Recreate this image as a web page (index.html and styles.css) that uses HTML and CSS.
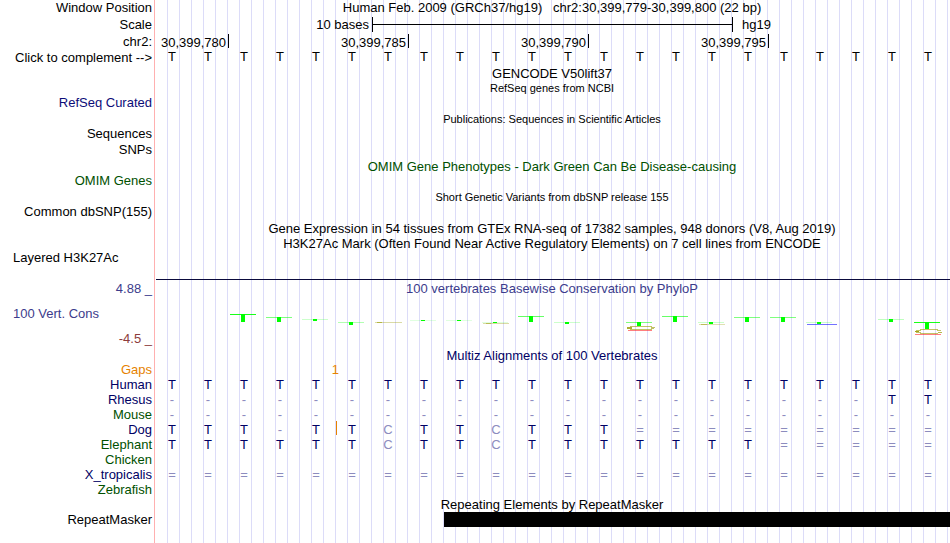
FILE: index.html
```html
<!DOCTYPE html>
<html lang="en">
<head>
  <meta charset="UTF-8">
  <meta name="viewport" content="width=device-width, initial-scale=1.0">
  <title>Human chr2:30,399,779-30,399,800 Genome Browser</title>
  <link rel="stylesheet" href="styles.css">
</head>
<body>
  <main class="browser">
    <!-- Ruler -->
    <div class="row">
      <div class="label">Window Position</div>
      <div class="title position">Human Feb. 2009 (GRCh37/hg19)   chr2:30,399,779-30,399,800 (22 bp)</div>
    </div>
    <div class="row tall">
      <div class="label">Scale</div>
      <div class="plot columns">
        <span class="scale-size">10 bases</span>
        <span class="scale-bar"></span>
        <span class="scale-db">hg19</span>
      </div>
    </div>
    <div class="row tall">
      <div class="label">chr2:</div>
      <div class="plot columns">
        <span class="tick tick-780">30,399,780</span>
        <span class="tick tick-785">30,399,785</span>
        <span class="tick tick-790">30,399,790</span>
        <span class="tick tick-795">30,399,795</span>
      </div>
    </div>
    <div class="row short">
      <div class="label">Click to complement --&gt;</div>
      <div class="plot columns ruler-bases" id="ruler-bases"></div>
    </div>

    <!-- Gene and variant tracks -->
    <div class="row heading"><div class="title">GENCODE V50lift37</div></div>
    <div class="row short"><div class="title small">RefSeq genes from NCBI</div></div>
    <div class="row short data"><div class="label blue">RefSeq Curated</div></div>
    <div class="row"><div class="title small">Publications: Sequences in Scientific Articles</div></div>
    <div class="row short data"><div class="label">Sequences</div></div>
    <div class="row"><div class="label">SNPs</div></div>
    <div class="row heading"><div class="title green">OMIM Gene Phenotypes - Dark Green Can Be Disease-causing</div></div>
    <div class="row short data"><div class="label green">OMIM Genes</div></div>
    <div class="row"><div class="title small">Short Genetic Variants from dbSNP release 155</div></div>
    <div class="row short data"><div class="label">Common dbSNP(155)</div></div>
    <div class="row heading"><div class="title">Gene Expression in 54 tissues from GTEx RNA-seq of 17382 samples, 948 donors (V8, Aug 2019)</div></div>
    <div class="row short"><div class="title">H3K27Ac Mark (Often Found Near Active Regulatory Elements) on 7 cell lines from ENCODE</div></div>
    <div class="row histone">
      <div class="label left">Layered H3K27Ac</div>
      <div class="plot baseline"></div>
    </div>

    <!-- Conservation -->
    <div class="row conservation">
      <div class="label axis">
        <span>4.88 _</span>
        <span class="axis-name">100 Vert. Cons</span>
        <span class="axis-min">-4.5 _</span>
      </div>
      <div class="plot">
        <div class="axis-title">100 vertebrates Basewise Conservation by PhyloP</div>
        <svg class="logo" viewBox="0 0 792 50" preserveAspectRatio="none" aria-hidden="true">
          <g class="arms" fill="#00ff00">
            <rect x="74" y="16" width="26" height="1" opacity="0.9"></rect>
            <rect x="110" y="19" width="26" height="1" opacity="0.5"></rect>
            <rect x="146" y="21" width="26" height="1" opacity="0.2"></rect>
            <rect x="182" y="24" width="26" height="1" opacity="0.3"></rect>
            <rect x="254" y="22" width="26" height="1" opacity="0.12"></rect>
            <rect x="290" y="22" width="26" height="1" opacity="0.12"></rect>
            <rect x="326" y="24" width="26" height="1" opacity="0.12"></rect>
            <rect x="362" y="18" width="26" height="1" opacity="0.6"></rect>
            <rect x="398" y="24" width="26" height="1" opacity="0.2"></rect>
            <rect x="470" y="24" width="26" height="1" opacity="0.5"></rect>
            <rect x="506" y="18" width="26" height="1" opacity="0.6"></rect>
            <rect x="542" y="24" width="26" height="1" opacity="0.2"></rect>
            <rect x="578" y="19" width="26" height="1" opacity="0.5"></rect>
            <rect x="614" y="19" width="26" height="1" opacity="0.5"></rect>
            <rect x="650" y="24" width="26" height="1" opacity="0.2"></rect>
            <rect x="722" y="21" width="26" height="1" opacity="0.25"></rect>
            <rect x="758" y="24" width="26" height="1" opacity="0.9"></rect>
          </g>
          <g class="stems" fill="#00ff00">
            <rect x="85" y="16" width="4" height="8"></rect>
            <rect x="121" y="19" width="4" height="5"></rect>
            <rect x="157" y="21" width="4" height="2"></rect>
            <rect x="193" y="24" width="4" height="3"></rect>
            <rect x="265" y="22" width="4" height="1"></rect>
            <rect x="301" y="22" width="4" height="1"></rect>
            <rect x="337" y="24" width="4" height="1"></rect>
            <rect x="373" y="18" width="4" height="6"></rect>
            <rect x="409" y="24" width="4" height="2"></rect>
            <rect x="481" y="24" width="4" height="4"></rect>
            <rect x="517" y="18" width="4" height="6"></rect>
            <rect x="553" y="24" width="4" height="2"></rect>
            <rect x="589" y="19" width="4" height="5"></rect>
            <rect x="625" y="19" width="4" height="5"></rect>
            <rect x="661" y="24" width="4" height="2"></rect>
            <rect x="733" y="21" width="4" height="3"></rect>
            <rect x="769" y="24" width="4" height="7"></rect>
          </g>
          <!-- flattened bases under the T -->
          <g fill="#999900">
            <rect x="219" y="24" width="27" height="1" opacity="0.35"></rect>
            <rect x="221" y="24" width="5" height="1" opacity="0.6"></rect>
            <rect x="327" y="25" width="26" height="1" opacity="0.35"></rect>
            <rect x="330" y="25" width="5" height="1" opacity="0.5"></rect>
            <rect x="543" y="26" width="26" height="1" opacity="0.3"></rect>
            <rect x="545" y="26" width="6" height="1" opacity="0.5"></rect>
            <rect x="471" y="29" width="5" height="2" opacity="0.8"></rect>
            <rect x="495" y="29" width="4" height="1" opacity="0.6"></rect>
            <rect x="495" y="30" width="3" height="1" opacity="0.6"></rect>
            <rect x="760" y="32" width="5" height="1" opacity="0.6"></rect>
            <rect x="759" y="33" width="4" height="1" opacity="0.9"></rect>
            <rect x="760" y="34" width="5" height="1" opacity="0.6"></rect>
            <rect x="781" y="32" width="4" height="1" opacity="0.6"></rect>
            <rect x="782" y="34" width="4" height="1" opacity="0.7"></rect>
          </g>
          <g fill="none" stroke="#999900" opacity="0.6">
            <path d="M474 28.5H496M474 31.5H496"></path>
            <path d="M764 31.5H782M764 35.5H782"></path>
          </g>
          <g fill="#ff0000">
            <rect x="472" y="32" width="24" height="1" opacity="0.5"></rect>
            <rect x="759" y="36" width="26" height="1" opacity="0.5"></rect>
          </g>
          <rect x="651" y="26" width="30" height="1" fill="#0000ff" opacity="0.55"></rect>
        </svg>
      </div>
    </div>

    <!-- Alignment -->
    <div class="row tight"><div class="title navy">Multiz Alignments of 100 Vertebrates</div></div>
    <table class="alignment">
      <thead>
        <tr class="gaps">
          <th scope="row">Gaps</th>
          <td colspan="5"><span class="gap-count">1</span></td>
          <td colspan="17"></td>
        </tr>
      </thead>
      <tbody id="alignment-body"></tbody>
    </table>

    <!-- Repeats -->
    <div class="row short repeats"><div class="title">Repeating Elements by RepeatMasker</div></div>
    <div class="row short">
      <div class="label">RepeatMasker</div>
      <div class="plot columns"><span class="repeat"></span></div>
    </div>
  </main>

  <script src="tracks.js"></script>
</body>
</html>
```
FILE: styles.css
```css
* {
  margin: 0;
  padding: 0;
  box-sizing: border-box;
}

body {
  background: #ffffff;
  color: #000000;
  font-family: "Liberation Sans", Arial, Helvetica, sans-serif;
  font-size: 13px;
}

/* guide lines: three per base, only behind the plot area */
.browser {
  min-height: 100vh;
  padding: 0 2px 0 156px;
  background-image:
    linear-gradient(#ffb0b0, #ffb0b0),
    linear-gradient(to left, #dcdcf8 1px, transparent 1px);
  background-origin: padding-box, content-box;
  background-clip: padding-box, content-box;
  background-position: 154px 0, 0 0;
  background-size: 1px 100%, calc(100% / 66) 100%;
  background-repeat: no-repeat, repeat-x;
}

.row {
  display: grid;
  grid-template-columns: 156px 1fr;
  height: 16px;
  line-height: 16px;
  margin-left: -156px;
  white-space: nowrap;
}

.row.heading {
  line-height: 18px;
}

.row.short {
  height: 15px;
  line-height: 15px;
}

.row.data {
  line-height: 13px;
}

.row.tight {
  height: 14px;
  line-height: 15px;
}

.row.tall {
  height: 17px;
  line-height: 18px;
}

.label {
  grid-column: 1;
  padding-right: 4px;
  text-align: right;
}

.label.left {
  padding-left: 13px;
  text-align: left;
}

.title,
.plot {
  grid-column: 2;
  min-width: 0;
}

.title {
  text-align: center;
}

.position {
  white-space: pre;
}

.small {
  font-size: 11px;
}

.blue {
  color: #0c0c78;
}

.navy {
  color: #000064;
}

.green {
  color: #005000;
}

.columns {
  display: grid;
  grid-template-columns: repeat(22, minmax(0, 1fr));
}

.scale-size {
  grid-column: 1 / 7;
  padding-right: 3px;
  text-align: right;
}

.scale-bar {
  grid-column: 7 / 17;
  height: 15px;
  margin: 1px -1px 0 0;
  border: solid #000000;
  border-width: 0 1px;
  background: linear-gradient(#000000, #000000) 0 7px / 100% 1px no-repeat;
}

.scale-db {
  grid-column: 17 / 20;
  padding-left: 10px;
}

.tick {
  height: 14px;
  margin: 1px -1px 0 0;
  padding-right: 2px;
  border-right: 1px solid #000000;
  line-height: 17px;
  text-align: right;
}

.tick-780 {
  grid-column: 1 / 3;
}

.tick-785 {
  grid-column: 5 / 8;
}

.tick-790 {
  grid-column: 10 / 13;
}

.tick-795 {
  grid-column: 15 / 18;
}

.ruler-bases span {
  padding-right: 4px;
  text-align: center;
  line-height: 13px;
}

.row.histone {
  height: 29px;
  line-height: 13px;
}

.baseline {
  margin-right: -2px;
  border-bottom: 1px solid #0a0a3c;
}

.row.conservation {
  height: 68px;
  line-height: 18px;
  color: #3c3c8c;
}

.axis {
  display: flex;
  flex-direction: column;
  justify-content: space-between;
}

.axis-name {
  padding-left: 13px;
  text-align: left;
}

.axis-min {
  color: #8c3c3c;
}

.axis-title {
  text-align: center;
}

.logo {
  display: block;
  width: 100%;
  height: 50px;
}

.logo rect {
  shape-rendering: crispEdges;
}

.alignment {
  width: calc(100% + 156px);
  margin-left: -156px;
  border-collapse: collapse;
  table-layout: fixed;
  line-height: 15px;
}

.alignment th {
  width: 156px;
  height: 15px;
  padding-right: 4px;
  font-weight: normal;
  text-align: right;
}

.alignment td {
  position: relative;
  height: 15px;
  padding-right: 4px;
  color: #000064;
  text-align: center;
}

.alignment .faint {
  color: #8c8cbe;
}

.alignment .gaps th,
.alignment .gaps td {
  color: #e68200;
}

.alignment .gaps td {
  padding-right: 0;
  text-align: right;
}

.gap-count {
  margin-right: -3px;
}

.alignment .insert::before {
  content: "";
  position: absolute;
  top: -1px;
  left: 0;
  width: 1px;
  height: 14px;
  background: #e68200;
}

.repeat {
  grid-column: 9 / 23;
  margin-right: -2px;
  background: #000000;
}
```
FILE: tracks.js
```js
const species = [
  { name: "Human", color: "navy", bases: "TTTTTTTTTTTTTTTTTTTTTT" },
  { name: "Rhesus", color: "navy", bases: "--------------------TT" },
  { name: "Mouse", color: "green", bases: "----------------------" },
  { name: "Dog", color: "navy", bases: "TTT-TTCTTCTTT=========", insertAt: 5 },
  { name: "Elephant", color: "green", bases: "TTTTTTCTTCTTTTTTT=====" },
  { name: "Chicken", color: "green", bases: "" },
  { name: "X_tropicalis", color: "navy", bases: "======================" },
  { name: "Zebrafish", color: "green", bases: "" }
];

const ruler = document.getElementById("ruler-bases");
for (const base of species[0].bases) {
  const cell = document.createElement("span");
  cell.textContent = base;
  ruler.appendChild(cell);
}

const body = document.getElementById("alignment-body");
species.forEach((s) => {
  const row = body.insertRow();
  const head = document.createElement("th");
  head.scope = "row";
  head.className = s.color;
  head.textContent = s.name;
  row.appendChild(head);

  for (let i = 0; i < 22; i++) {
    const cell = row.insertCell();
    const base = s.bases[i] || "";
    cell.textContent = base;
    // anything that differs from the human base is drawn faint
    if (base !== "T") cell.classList.add("faint");
    if (i === s.insertAt) cell.classList.add("insert");
  }
});
```
